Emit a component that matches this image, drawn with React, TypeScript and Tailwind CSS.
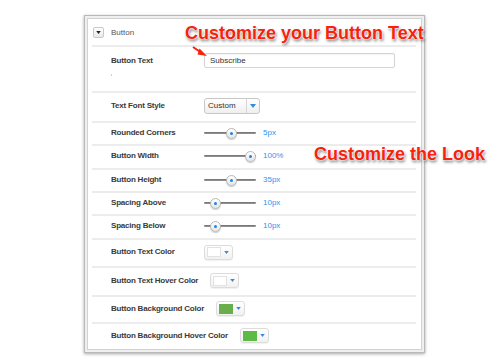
import React from "react";

const Tri = ({ color = "#2f8be0", w = 6, h = 4 }: { color?: string; w?: number; h?: number }) => (
  <svg width={w} height={h} viewBox="0 0 6 4" className="shrink-0">
    <path d="M0 0 L6 0 L3 4 Z" fill={color} />
  </svg>
);

function Label({ children }: { children: React.ReactNode }) {
  return (
    <div className="min-w-[81px] mr-[12px] text-[8px] font-bold tracking-[-0.2px] text-[#3a3a3a] leading-[12px] whitespace-nowrap">
      {children}
    </div>
  );
}

function Slider({ pos, value }: { pos: number; value: string }) {
  return (
    <div className="flex items-center">
      <div className="relative w-[52px] h-[12px] flex items-center">
        <div className="w-full h-[2px] rounded-full bg-gradient-to-b from-[#6f6f6f] to-[#9a9a9a]" />
        <div
          className="absolute top-[1px] w-[11px] h-[11px] rounded-full border border-[#b8b8b8] bg-gradient-to-b from-white to-[#e6e6e6] shadow-[0_1px_1px_rgba(0,0,0,0.2)] flex items-center justify-center"
          style={{ left: pos - 5.5 }}
        >
          <div className="w-[3px] h-[3px] rounded-full bg-[#1f86e0]" />
        </div>
      </div>
      <div className="ml-[7px] text-[8px] text-[#2a95ee] leading-[12px]">{value}</div>
    </div>
  );
}

function ColorPick({ color }: { color: string }) {
  const white = color === "#ffffff";
  return (
    <div className="w-[29px] h-[15px] rounded-[3px] border border-[#dcdcdc] bg-gradient-to-b from-white to-[#f1f1f1] flex items-center pl-[2px] pr-[3px] gap-[3px] shadow-[0_1px_1px_rgba(0,0,0,0.06)]">
      <div
        className={"w-[16px] h-[10px] " + (white ? "border border-[#e2e2e2]" : "")}
        style={{ background: color }}
      />
      <Tri w={5} h={3} />
    </div>
  );
}

function Row({
  h,
  last,
  children,
}: {
  h: string;
  last?: boolean;
  children: React.ReactNode;
}) {
  return (
    <div
      className={
        "flex items-center pl-[19px] pb-[2px] " +
        h +
        (last ? "" : " border-b-2 border-[#ececec]")
      }
    >
      {children}
    </div>
  );
}

export default function App() {
  const shadow =
    "[text-shadow:0_0_1px_#fff,0_0_2px_#fff,0_0_2px_#fff,1px_2px_3px_rgba(0,0,0,0.6)]";
  return (
    <div className="relative w-[500px] h-[360px] bg-white overflow-hidden font-['Liberation_Sans',Arial,sans-serif]">
      <div className="ml-[84px] mt-[15px] w-[341px] border border-[#b9b9b9] bg-[#efefef] p-[2px] shadow-[0_1px_3px_rgba(0,0,0,0.35)]">
        <div className="border border-[#d2d2d2] bg-white pl-[4px] pr-[5px]">
          {/* header */}
          <div className="h-[28px] flex items-center pl-[1px] pt-[1px] border-b-2 border-[#ececec]">
            <div className="w-[11px] h-[11px] rounded-[2px] border border-[#c9c9c9] bg-gradient-to-b from-white to-[#e9e9e9] flex items-center justify-center">
              <Tri color="#222" w={5} h={3} />
            </div>
            <div className="ml-[7px] text-[8px] text-[#555] leading-[12px]">Button</div>
          </div>

          {/* Button Text */}
          <div className="relative h-[46px] flex items-start pl-[19px] pt-[6px] border-b-2 border-[#ececec]">
            <div className="h-[15px] flex items-center">
              <Label>Button Text</Label>
            </div>
            <div className="w-[191px] h-[15px] border border-[#d4d4d4] rounded-[2px] shadow-[inset_0_1px_1px_rgba(0,0,0,0.05)] flex items-center pl-[5px] text-[8px] text-[#333]">
              Subscribe
            </div>
            <div className="absolute left-[19px] top-[27px] w-[1px] h-[2px] bg-[#d0d0d0]" />
          </div>

          <Row h="h-[30px]">
            <Label>Text Font Style</Label>
            <div className="w-[56px] h-[16px] rounded-[3px] border border-[#c8c8c8] bg-gradient-to-b from-white to-[#efefef] flex items-center">
              <div className="flex-1 h-full flex items-center pl-[3px] text-[8px] text-[#333] border-r border-[#d6d6d6]">
                Custom
              </div>
              <div className="w-[12px] flex items-center justify-center">
                <Tri />
              </div>
            </div>
          </Row>
          <Row h="h-[23px]">
            <Label>Rounded Corners</Label>
            <Slider pos={27} value="5px" />
          </Row>
          <Row h="h-[24px]">
            <Label>Button Width</Label>
            <Slider pos={46} value="100%" />
          </Row>
          <Row h="h-[23px]">
            <Label>Button Height</Label>
            <Slider pos={27} value="35px" />
          </Row>
          <Row h="h-[23px]">
            <Label>Spacing Above</Label>
            <Slider pos={11} value="10px" />
          </Row>
          <Row h="h-[24px]">
            <Label>Spacing Below</Label>
            <Slider pos={11} value="10px" />
          </Row>
          <Row h="h-[28px]">
            <Label>Button Text Color</Label>
            <ColorPick color="#ffffff" />
          </Row>
          <Row h="h-[29px]">
            <Label>Button Text Hover Color</Label>
            <ColorPick color="#ffffff" />
          </Row>
          <Row h="h-[27px]">
            <Label>Button Background Color</Label>
            <ColorPick color="#68ae4c" />
          </Row>
          <Row h="h-[25px]" last>
            <Label>Button Background Hover Color</Label>
            <ColorPick color="#5dba44" />
          </Row>
        </div>
      </div>

      {/* annotations */}
      <div
        className={
          "absolute left-[185px] top-[24px] text-[18px] leading-[18px] font-bold text-[#f5220c] whitespace-nowrap " +
          shadow
        }
      >
        Customize your Button Text
      </div>
      <div
        className={
          "absolute left-[314px] top-[145px] text-[18px] leading-[18px] font-bold text-[#f5220c] whitespace-nowrap " +
          shadow
        }
      >
        Customize the Look
      </div>
      <svg className="absolute left-[188px] top-[42px]" width="22" height="18" viewBox="0 0 22 18">
        <path d="M5 5 L13 10.5" strokeWidth="2" stroke="#f5220c" />
        <path d="M11.5 6.5 L19 14 L9.5 12.5 Z" fill="#f5220c" />
      </svg>
    </div>
  );
}
